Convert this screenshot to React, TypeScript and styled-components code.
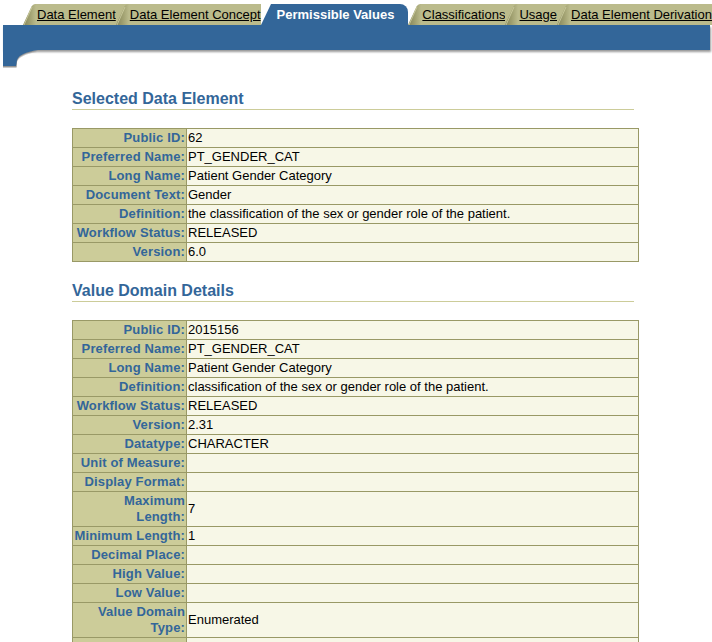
import React, { useId } from "react";
import styled, { createGlobalStyle } from "styled-components";

const GlobalStyle = createGlobalStyle`
  html, body {
    margin: 0;
    padding: 0;
    background: #ffffff;
    font-family: "Liberation Sans", Arial, sans-serif;
    overflow-x: hidden;
  }
`;

const BLUE = "#336699";
const TAB = "#bbbb8c";
const LABEL_BG = "#cccc99";
const VALUE_BG = "#f7f7e7";
const BORDER = "#999966";

const Header = styled.div`
  position: relative;
  width: 712px;
`;

const TabRow = styled.div`
  display: flex;
  align-items: flex-end;
  height: 25px;
  padding-left: 23px;
  white-space: nowrap;
  overflow: hidden;
`;

const TabItem = styled.div`
  display: flex;
  height: 21px;
  flex: none;
`;

const TabBody = styled.span<{ $active?: boolean }>`
  display: block;
  height: 21px;
  line-height: 21px;
  font-size: 13px;
  background: ${(p) => (p.$active ? BLUE : TAB)};
  color: ${(p) => (p.$active ? "#ffffff" : "#000000")};
  font-weight: ${(p) => (p.$active ? "bold" : "normal")};
  text-decoration: ${(p) => (p.$active ? "none" : "underline")};
  padding: ${(p) => (p.$active ? "0 14px 0 3px" : "0 0 0 1px")};
  border-top-right-radius: ${(p) => (p.$active ? "8px" : "0")};
  cursor: pointer;
`;

const Bar = styled.div`
  position: relative;
  margin-left: 3px;
  width: 707px;
  height: 25px;
  background: ${BLUE};
  box-shadow: 1px 2px 2px rgba(0, 0, 0, 0.4);
`;

const Flare = styled.svg`
  position: absolute;
  left: 0;
  top: 25px;
`;

const Content = styled.div`
  padding: 38px 0 40px 72px;
  width: 567px;
`;

const Section = styled.section`
  & + & {
    margin-top: 18px;
  }
`;

const Heading = styled.h2`
  margin: 0 5px 0 0;
  padding: 1px 0 0 0;
  height: 20px;
  line-height: 20px;
  font-size: 16px;
  font-weight: bold;
  color: ${BLUE};
  border-bottom: 1px solid ${LABEL_BG};
`;

const Table = styled.table`
  margin-top: 18px;
  width: 567px;
  border-collapse: collapse;
  table-layout: fixed;
  border: 1px solid ${BORDER};
`;

const Cell = styled.td<{ $label?: boolean }>`
  border: 1px solid ${BORDER};
  padding: 1px;
  line-height: 16px;
  font-size: 13px;
  vertical-align: middle;
  white-space: pre-line;
  background: ${(p) => (p.$label ? LABEL_BG : VALUE_BG)};
  color: ${(p) => (p.$label ? BLUE : "#000000")};
  font-weight: ${(p) => (p.$label ? "bold" : "normal")};
  text-align: ${(p) => (p.$label ? "right" : "left")};
  letter-spacing: ${(p) => (p.$label ? "0.15px" : "0")};
`;

type TabDef = { label: string; active?: boolean; behind?: string };

const tabs: TabDef[] = [
  { label: "Data Element" },
  { label: "Data Element Concept", behind: TAB },
  { label: "Permissible Values", active: true },
  { label: "Classifications" },
  { label: "Usage", behind: TAB },
  { label: "Data Element Derivation", behind: TAB },
];

function Slant({ active, behind }: { active?: boolean; behind?: string }) {
  const id = useId().replace(/:/g, "");
  return (
    <svg width="13" height="21" viewBox="0 0 13 21" style={{ display: "block", flex: "none" }}>
      {behind && <rect x="0" y="0" width="13" height="21" fill={behind} />}
      {active ? (
        <polygon points="0,21 10,0 13,0 13,21" fill={BLUE} />
      ) : (
        <>
          <defs>
            <linearGradient id={`g${id}`} x1="0" y1="0" x2="1" y2="0">
              <stop offset="0" stopColor="#84845a" />
              <stop offset="0.5" stopColor="#9e9e6e" />
              <stop offset="1" stopColor={TAB} />
            </linearGradient>
          </defs>
          <path d="M0 21 L8.5 2.5 Q10 0 12 0 L13 0 L13 21 Z" fill={`url(#g${id})`} />
          <path d="M1 21 L9 3" stroke="#d2d2a6" strokeWidth="0.8" fill="none" />
        </>
      )}
    </svg>
  );
}

type Row = { label: string; value: string };

const dataElement: Row[] = [
  { label: "Public ID:", value: "62" },
  { label: "Preferred Name:", value: "PT_GENDER_CAT" },
  { label: "Long Name:", value: "Patient Gender Category" },
  { label: "Document Text:", value: "Gender" },
  { label: "Definition:", value: "the classification of the sex or gender role of the patient." },
  { label: "Workflow Status:", value: "RELEASED" },
  { label: "Version:", value: "6.0" },
];

const valueDomain: Row[] = [
  { label: "Public ID:", value: "2015156" },
  { label: "Preferred Name:", value: "PT_GENDER_CAT" },
  { label: "Long Name:", value: "Patient Gender Category" },
  { label: "Definition:", value: "classification of the sex or gender role of the patient." },
  { label: "Workflow Status:", value: "RELEASED" },
  { label: "Version:", value: "2.31" },
  { label: "Datatype:", value: "CHARACTER" },
  { label: "Unit of Measure:", value: "" },
  { label: "Display Format:", value: "" },
  { label: "Maximum\nLength:", value: "7" },
  { label: "Minimum Length:", value: "1" },
  { label: "Decimal Place:", value: "" },
  { label: "High Value:", value: "" },
  { label: "Low Value:", value: "" },
  { label: "Value Domain\nType:", value: "Enumerated" },
  { label: "Conceptual\nDomain Public ID:", value: "2008538" },
  { label: "Conceptual\nDomain Short Name:", value: "Gender" },
  { label: "Conceptual\nDomain Version:", value: "1.0" },
  { label: "Conceptual\nDomain Context:", value: "CTEP" },
];

function DetailTable({ rows }: { rows: Row[] }) {
  return (
    <Table>
      <colgroup>
        <col style={{ width: 114 }} />
        <col />
      </colgroup>
      <tbody>
        {rows.map((r, i) => (
          <tr key={i}>
            <Cell $label>{r.label}</Cell>
            <Cell>{r.value}</Cell>
          </tr>
        ))}
      </tbody>
    </Table>
  );
}

export default function App() {
  return (
    <>
      <GlobalStyle />
      <Header>
        <TabRow>
          {tabs.map((t) => (
            <TabItem key={t.label}>
              <Slant active={t.active} behind={t.behind} />
              <TabBody $active={t.active}>{t.label}</TabBody>
            </TabItem>
          ))}
        </TabRow>
        <Bar>
          <Flare width="40" height="20" viewBox="0 0 40 20">
            <path d="M0 2 H34 C22 4 16 7 14 12 L13.5 18 H0 Z" fill="#9a9a9a" opacity="0.55" />
            <path d="M0 1 H34 C22 3 16 6 14 11 L13.5 17 H0 Z" fill="#6f6f6f" opacity="0.6" />
            <path d="M0 0 H35 C22 2 16 5 14 10 L13 16 H0 Z" fill={BLUE} />
          </Flare>
        </Bar>
      </Header>
      <Content>
        <Section>
          <Heading>Selected Data Element</Heading>
          <DetailTable rows={dataElement} />
        </Section>
        <Section>
          <Heading>Value Domain Details</Heading>
          <DetailTable rows={valueDomain} />
        </Section>
      </Content>
    </>
  );
}
